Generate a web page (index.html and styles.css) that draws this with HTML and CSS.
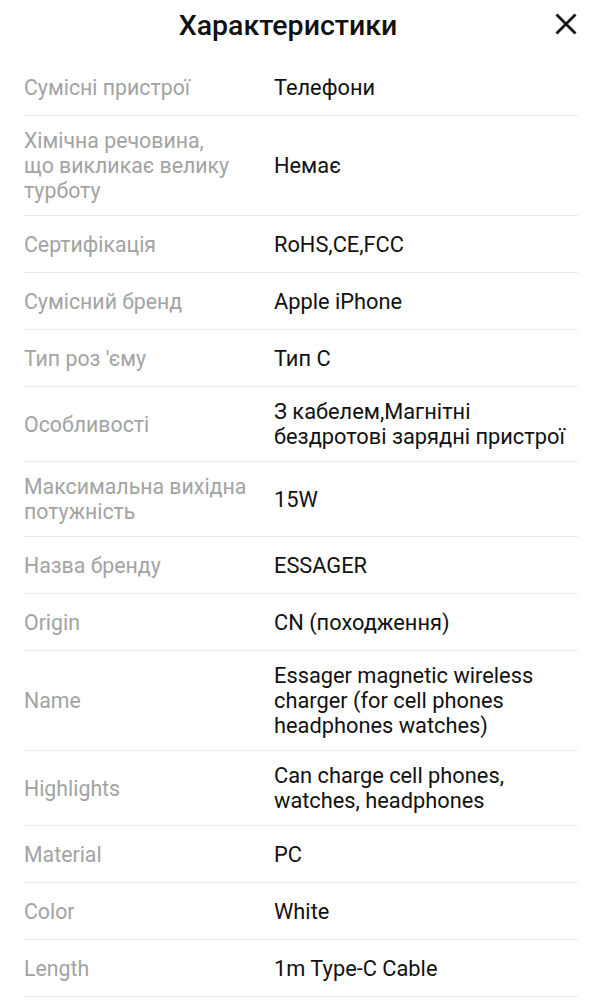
FILE: index.html
```html
<!DOCTYPE html>
<html lang="uk">
<head>
<meta charset="utf-8">
<link rel="stylesheet" href="styles.css">
</head>
<body>
<div class="sheet">
  <header class="head">
    <h1 class="title">Характеристики</h1>
    <button class="close" aria-label="Закрити">
      <svg width="22" height="22" viewBox="0 0 22 22"><path d="M1.5 1.5 L20.5 20.5 M20.5 1.5 L1.5 20.5" stroke="#111" stroke-width="2.8" stroke-linecap="butt"/></svg>
    </button>
  </header>
  <div class="list">
    <div class="row"><div class="k">Сумісні пристрої</div><div class="v">Телефони</div></div>
    <div class="row"><div class="k">Хімічна речовина,<br>що викликає велику<br>турботу</div><div class="v">Немає</div></div>
    <div class="row"><div class="k">Сертифікація</div><div class="v">RoHS,CE,FCC</div></div>
    <div class="row"><div class="k">Сумісний бренд</div><div class="v">Apple iPhone</div></div>
    <div class="row"><div class="k">Тип роз 'єму</div><div class="v">Тип C</div></div>
    <div class="row"><div class="k">Особливості</div><div class="v">З кабелем,Магнітні<br>бездротові зарядні пристрої</div></div>
    <div class="row"><div class="k">Максимальна вихідна<br>потужність</div><div class="v">15W</div></div>
    <div class="row"><div class="k">Назва бренду</div><div class="v">ESSAGER</div></div>
    <div class="row"><div class="k">Origin</div><div class="v">CN (походження)</div></div>
    <div class="row"><div class="k">Name</div><div class="v">Essager magnetic wireless<br>charger (for cell phones<br>headphones watches)</div></div>
    <div class="row"><div class="k">Highlights</div><div class="v">Can charge cell phones,<br>watches, headphones</div></div>
    <div class="row"><div class="k">Material</div><div class="v">PC</div></div>
    <div class="row"><div class="k">Color</div><div class="v">White</div></div>
    <div class="row"><div class="k">Length</div><div class="v">1m Type-C Cable</div></div>
  </div>
</div>
</body>
</html>
```

FILE: styles.css
```css
* { box-sizing: border-box; }
html, body { margin: 0; padding: 0; background: #fff; }
body { font-family: Roboto, "Noto Sans", sans-serif; color: #111; }
.sheet { padding: 0 25px 0 24px; }
.head {
  height: 59px;
  display: flex;
  align-items: center;
  justify-content: center;
  position: relative;
}
.title {
  margin: 0 0 9px 0;
  font-size: 28.5px;
  font-weight: 500;
  color: #111;
  padding-right: 26px;
}
.close {
  position: absolute;
  right: 1px;
  top: 13px;
  width: 22px;
  height: 22px;
  padding: 0;
  border: 0;
  background: none;
  display: flex;
}
.list { display: flex; flex-direction: column; }
.row {
  display: flex;
  align-items: center;
  min-height: 57px;
  padding: 12px 0;
  border-bottom: 1px solid #ececec;
  line-height: 25px;
}
.k { width: 250px; flex: none; color: #a3a3a3; font-size: 21.3px; }
.v { flex: 1; color: #111; font-size: 21.8px; }
```
